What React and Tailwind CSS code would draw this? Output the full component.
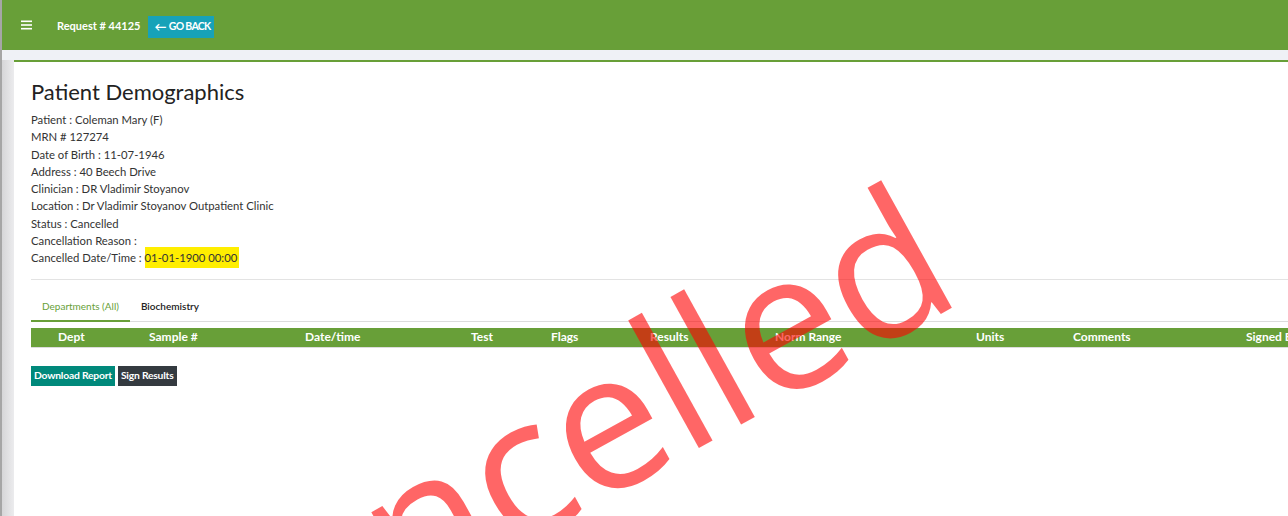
import React from "react";

const cols = [
  { w: "w-[23px]", t: "" },
  { w: "w-[91px]", t: "Dept" },
  { w: "w-[156px]", t: "Sample #" },
  { w: "w-[166px]", t: "Date/time" },
  { w: "w-[80px]", t: "Test" },
  { w: "w-[99px]", t: "Flags" },
  { w: "w-[125px]", t: "Results" },
  { w: "w-[201px]", t: "Norm Range" },
  { w: "w-[97px]", t: "Units" },
  { w: "w-[173px]", t: "Comments" },
  { w: "w-[120px]", t: "Signed By" },
];

const lines = [
  "Patient : Coleman Mary (F)",
  "MRN # 127274",
  "Date of Birth : 11-07-1946",
  "Address : 40 Beech Drive",
  "Clinician : DR Vladimir Stoyanov",
  "Location : Dr Vladimir Stoyanov Outpatient Clinic",
  "Status : Cancelled",
  "Cancellation Reason :",
];

export default function App() {
  return (
    <div
      className="h-[516px] w-[1288px] overflow-hidden flex bg-[#eef0f4]"
      style={{ fontFamily: "Lato, 'Open Sans', sans-serif" }}
    >
      <div className="w-[2px] shrink-0 bg-[#a6a6a6]" />
      <div className="flex-1 flex flex-col min-w-0">
        <header className="h-[50px] shrink-0 bg-[#689f38] flex items-center">
          <svg className="ml-[19px] w-[11px] h-[10px]" viewBox="0 0 11 10">
            <rect x="0" y="0.5" width="11" height="1.6" fill="#fff" />
            <rect x="0" y="4.2" width="11" height="1.6" fill="#fff" />
            <rect x="0" y="7.9" width="11" height="1.6" fill="#fff" />
          </svg>
          <span className="ml-[25px] mt-[2px] text-white font-bold text-[11px]">Request # 44125</span>
          <button className="ml-[8px] mt-[4px] h-[22px] w-[66px] pl-[6px] bg-[#17a2b8] text-white font-bold text-[10.5px] flex items-center gap-[3px] uppercase tracking-[-0.7px]">
            <span className="text-[12px] leading-none">&#8592;</span>
            <span>Go Back</span>
          </button>
        </header>
        <div className="h-[10px] shrink-0 bg-[#eff1f6]" />
        <div className="flex-1 flex min-h-0">
          <div className="w-[12px] shrink-0 bg-gradient-to-r from-[#d6d6d8] to-[#ececee]" />
          <div className="flex-1 relative overflow-hidden bg-white border-t-2 border-[#689f38]">
            <div className="pl-[17px] pt-[16px] text-[#333] text-[11.3px]">
              <h1 className="text-[22px] leading-[28px] text-[#222] mb-[5px]">Patient Demographics</h1>
              <div className="leading-[17.3px]">
                {lines.map((l) => (
                  <div key={l}>{l}</div>
                ))}
                <div>
                  Cancelled Date/Time :{" "}
                  <span className="bg-[#ffee00] py-[4px] pr-[2px]">01-01-1900 00:00</span>
                </div>
              </div>
              <div className="mt-[12px] h-px bg-[#e3e3e3]" />
              <div className="mt-[19px] flex border-b border-[#dcdcdc] text-[10px] leading-[14px]">
                <div className="px-[11px] pb-[7px] text-[#689f38] border-b-2 border-[#689f38] -mb-px">
                  Departments (All)
                </div>
                <div className="px-[11px] pb-[7px] text-[#222] font-semibold">Biochemistry</div>
              </div>
              <div className="mt-[6px] flex h-[20px] bg-[#689f38] border-b border-[#dcdcdc] text-white font-bold text-[12px] whitespace-nowrap">
                {cols.map((c, i) => (
                  <div key={i} className={`${c.w} shrink-0 pl-[4px] flex items-center`}>
                    {c.t}
                  </div>
                ))}
              </div>
              <div className="mt-[18px] flex gap-[3px] text-[10.3px] font-bold text-white tracking-[-0.2px]">
                <button className="h-[20px] px-[3px] bg-[#00897b]">Download Report</button>
                <button className="h-[20px] px-[3px] bg-[#343a40]">Sign Results</button>
              </div>
            </div>
            <span
              className="pointer-events-none absolute right-[358px] top-[77px] text-[192px] leading-[192px] whitespace-nowrap text-[#ff000099] -rotate-[29deg] origin-right"
              style={{ fontFamily: "'Open Sans', sans-serif" }}
            >
              Cancelled
            </span>
          </div>
        </div>
      </div>
    </div>
  );
}
